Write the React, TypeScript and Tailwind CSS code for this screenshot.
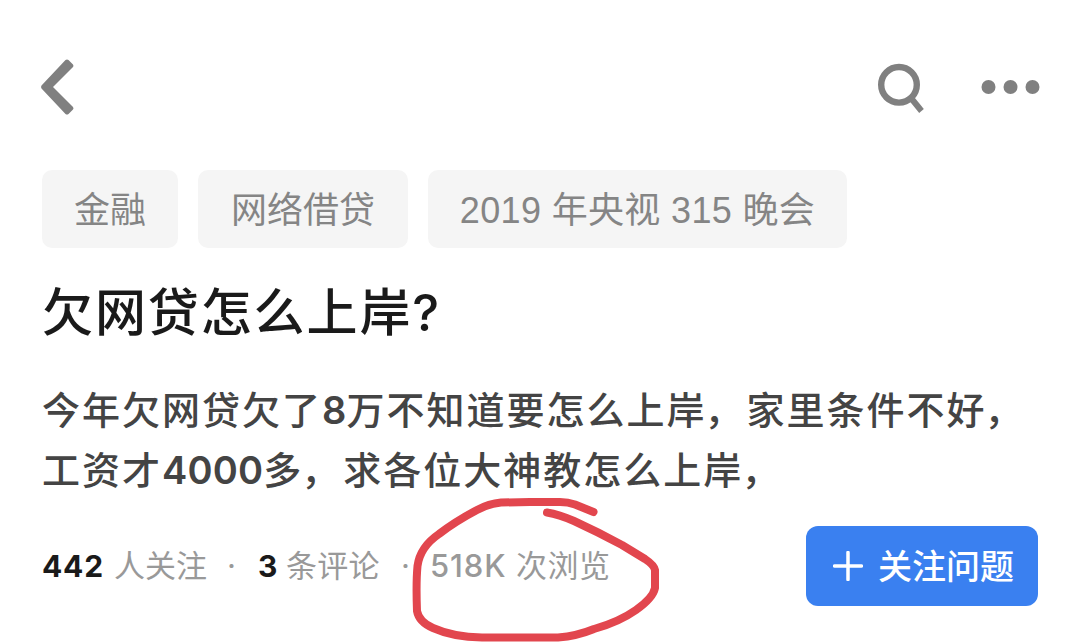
import React from 'react';

interface Tag {
  label: string;
  className: string;
}

const tags: Tag[] = [
  { label: '金融', className: 'w-[136px]' },
  { label: '网络借贷', className: 'w-[210px]' },
  { label: '2019 年央视 315 晚会', className: 'w-[419px] tracking-[0.35px]' },
];

const Header: React.FC = () => (
  <header className="flex h-[170px] items-start justify-between pl-10 pr-10 pt-[56px]">
    <button aria-label="返回">
      <svg width="36" height="62" viewBox="0 0 36 62" fill="none">
        <path
          d="M28.500 4 L33 8.500 Q34 10 33 11 L13 31 L33 51 Q34 52.500 33 53.500 L28.500 58 Q27 59 25.500 58 L1.500 32.500 Q0.500 31 1.500 29.500 L25.500 4 Q27 3 28.500 4 Z"
          fill="#808080"
        />
      </svg>
    </button>
    <div className="flex items-center gap-[56px]">
      <button aria-label="搜索">
        <svg width="48" height="62" viewBox="0 0 48 62" fill="none" stroke="#808080">
          <circle cx="23" cy="28.8" r="17.8" strokeWidth="6.4" />
          <path d="M35 42 L45.500 55" strokeWidth="6" />
        </svg>
      </button>
      <button aria-label="更多">
        <svg width="60" height="62" viewBox="0 0 60 62" fill="#808080">
          <circle cx="8.5" cy="31" r="7" />
          <circle cx="30.5" cy="31" r="7" />
          <circle cx="52.5" cy="31" r="7" />
        </svg>
      </button>
    </div>
  </header>
);

const Num: React.FC<{ children: string }> = ({ children }) => (
  <span className="font-['Inter'] text-[38px] font-semibold tracking-[0.2px]">{children}</span>
);

const Comma: React.FC = () => <span className="-ml-[2px] mr-[2px]">，</span>;

// Hand-drawn marker around the view count
const MarkerCircle: React.FC = () => (
  <svg
    className="pointer-events-none absolute left-[400px] top-[490px]"
    width="270"
    height="152"
    viewBox="0 0 270 152"
    fill="none"
  >
    <path
      d="M193.500 22 L175 14.500 Q168 12 160 12 L130 12 L101 12.500 Q89 13.500 77 20 Q56 31 39 44 Q20 57 17.500 76 C16 92 16.500 108 17 121 Q19 132 33 138 Q53 147 82 147.500 L158 147.500 Q177 146 194 139 Q219 132 236 120 Q253 108 255 98 L255 80 Q254 75 245 69 L222 55 Q198 42 174 31 Q159 24.500 147 22.500"
      stroke="#e2464e"
      strokeWidth="8"
      strokeLinecap="round"
      strokeLinejoin="round"
    />
  </svg>
);

export default function App() {
  return (
    <div className="relative h-[642px] w-[1080px] overflow-hidden bg-white font-['Inter','Noto_Sans_CJK_SC',sans-serif]">
      <Header />

      <div className="flex gap-5 pl-[42px]">
        {tags.map((tag) => (
          <div
            key={tag.label}
            className={`${tag.className} flex h-[78px] items-center justify-center rounded-[10px] bg-[#f5f5f5] pt-[3px] font-['Liberation_Sans','Noto_Sans_CJK_SC',sans-serif] text-[36px] font-normal whitespace-nowrap text-[#858585]`}
          >
            {tag.label}
          </div>
        ))}
      </div>

      <h1 className="mt-[30px] flex h-[70px] items-center pl-[42px] text-[51px] leading-[70px] font-medium tracking-[1.9px] whitespace-nowrap text-[#1a1a1a]">
        欠网贷怎么上岸?
      </h1>

      <p className="mt-[32px] pl-[42px] text-[38px] leading-[60px] font-medium tracking-[2px] whitespace-nowrap text-[#444444]">
        今年欠网贷欠了<Num>8</Num>万不知道要怎么上岸<Comma />家里条件不好<Comma />
        <br />
        工资才<Num>4000</Num>多<Comma />求各位大神教怎么上岸<Comma />
      </p>

      <div className="mt-[26px] flex h-[80px] items-center justify-between pl-[42px] pr-[42px]">
        <div className="flex items-center text-[31px] whitespace-nowrap text-[#999999]">
          <span className="w-[72px] text-[30px] tracking-[0.8px] font-bold text-[#1a1a1a]">442</span>
          <span className="w-[113px]">人关注</span>
          <span className="w-[31px]">·</span>
          <span className="w-[28px] text-[30px] font-bold text-[#1a1a1a]">3</span>
          <span className="w-[115px] tracking-[0.3px]">条评论</span>
          <span className="w-[29px]">·</span>
          <span className="w-[86px] font-medium tracking-[0.9px]">518K</span>
          <span className="tracking-[0.5px]">次浏览</span>
        </div>
        <button className="flex h-[80px] w-[232px] items-center rounded-[12px] bg-[#3a80f0] pl-[27px] text-[34px] font-medium whitespace-nowrap text-white">
          <svg width="30" height="30" viewBox="0 0 30 30" fill="none">
            <path d="M15 1.500 V28.500 M1.500 15 H28.500" stroke="white" strokeWidth="3.500" strokeLinecap="round" />
          </svg>
          <span className="ml-[15px]">关注问题</span>
        </button>
      </div>

      <MarkerCircle />
    </div>
  );
}
